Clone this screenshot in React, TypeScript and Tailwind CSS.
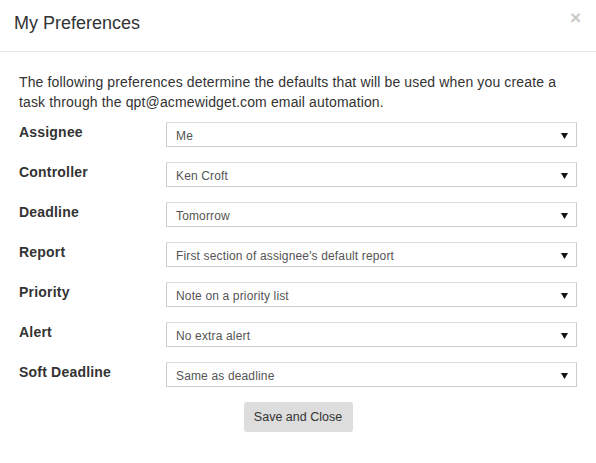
import React from 'react';

const rows: { label: string; value: string }[] = [
  { label: 'Assignee', value: 'Me' },
  { label: 'Controller', value: 'Ken Croft' },
  { label: 'Deadline', value: 'Tomorrow' },
  { label: 'Report', value: "First section of assignee's default report" },
  { label: 'Priority', value: 'Note on a priority list' },
  { label: 'Alert', value: 'No extra alert' },
  { label: 'Soft Deadline', value: 'Same as deadline' },
];

function FakeSelect({ value }: { value: string }) {
  return (
    <div className="flex-1 h-[25px] border border-[#ccc] border-t-[#ddd] bg-white flex items-center justify-between pl-[9px] pr-[8px]">
      <span className="text-[12px] tracking-[0.15px] text-[#555] leading-none pt-[3px]">{value}</span>
      <svg width="7" height="7" viewBox="0 0 7 7" className="mt-[1px]">
        <polygon points="0,1 7,1 3.5,7" fill="#111" />
      </svg>
    </div>
  );
}

export default function App() {
  return (
    <div className="w-[596px] h-[463px] bg-white text-[#333]" style={{ fontFamily: '"Liberation Sans", Arial, sans-serif' }}>
      <div className="flex items-start justify-between h-[52px] border-b border-[#e5e5e5] pl-[14px] pr-[15px]">
        <h4 className="text-[18px] leading-[25px] mt-[11px]">My Preferences</h4>
        <span className="text-[19px] font-bold leading-none mt-[8px] text-[#c9c9c9]">×</span>
      </div>

      <div className="px-[19px] pt-[20px]">
        <p className="text-[14px] tracking-[0.14px] leading-[20px] mb-[10px]">
          The following preferences determine the defaults that will be used when you create a task through the qpt@acmewidget.com email automation.
        </p>

        <div className="flex flex-col gap-[15px]">
          {rows.map((r) => (
            <div key={r.label} className="flex items-start">
              <label className="w-[147px] text-[14px] tracking-[0.2px] font-bold leading-[20px]">{r.label}</label>
              <FakeSelect value={r.value} />
            </div>
          ))}
        </div>

        <div className="flex justify-center mt-[15px]">
          <button className="w-[109px] h-[30px] rounded-[3px] bg-[#ddd] text-[12.5px] text-[#333]">
            Save and Close
          </button>
        </div>
      </div>
    </div>
  );
}
